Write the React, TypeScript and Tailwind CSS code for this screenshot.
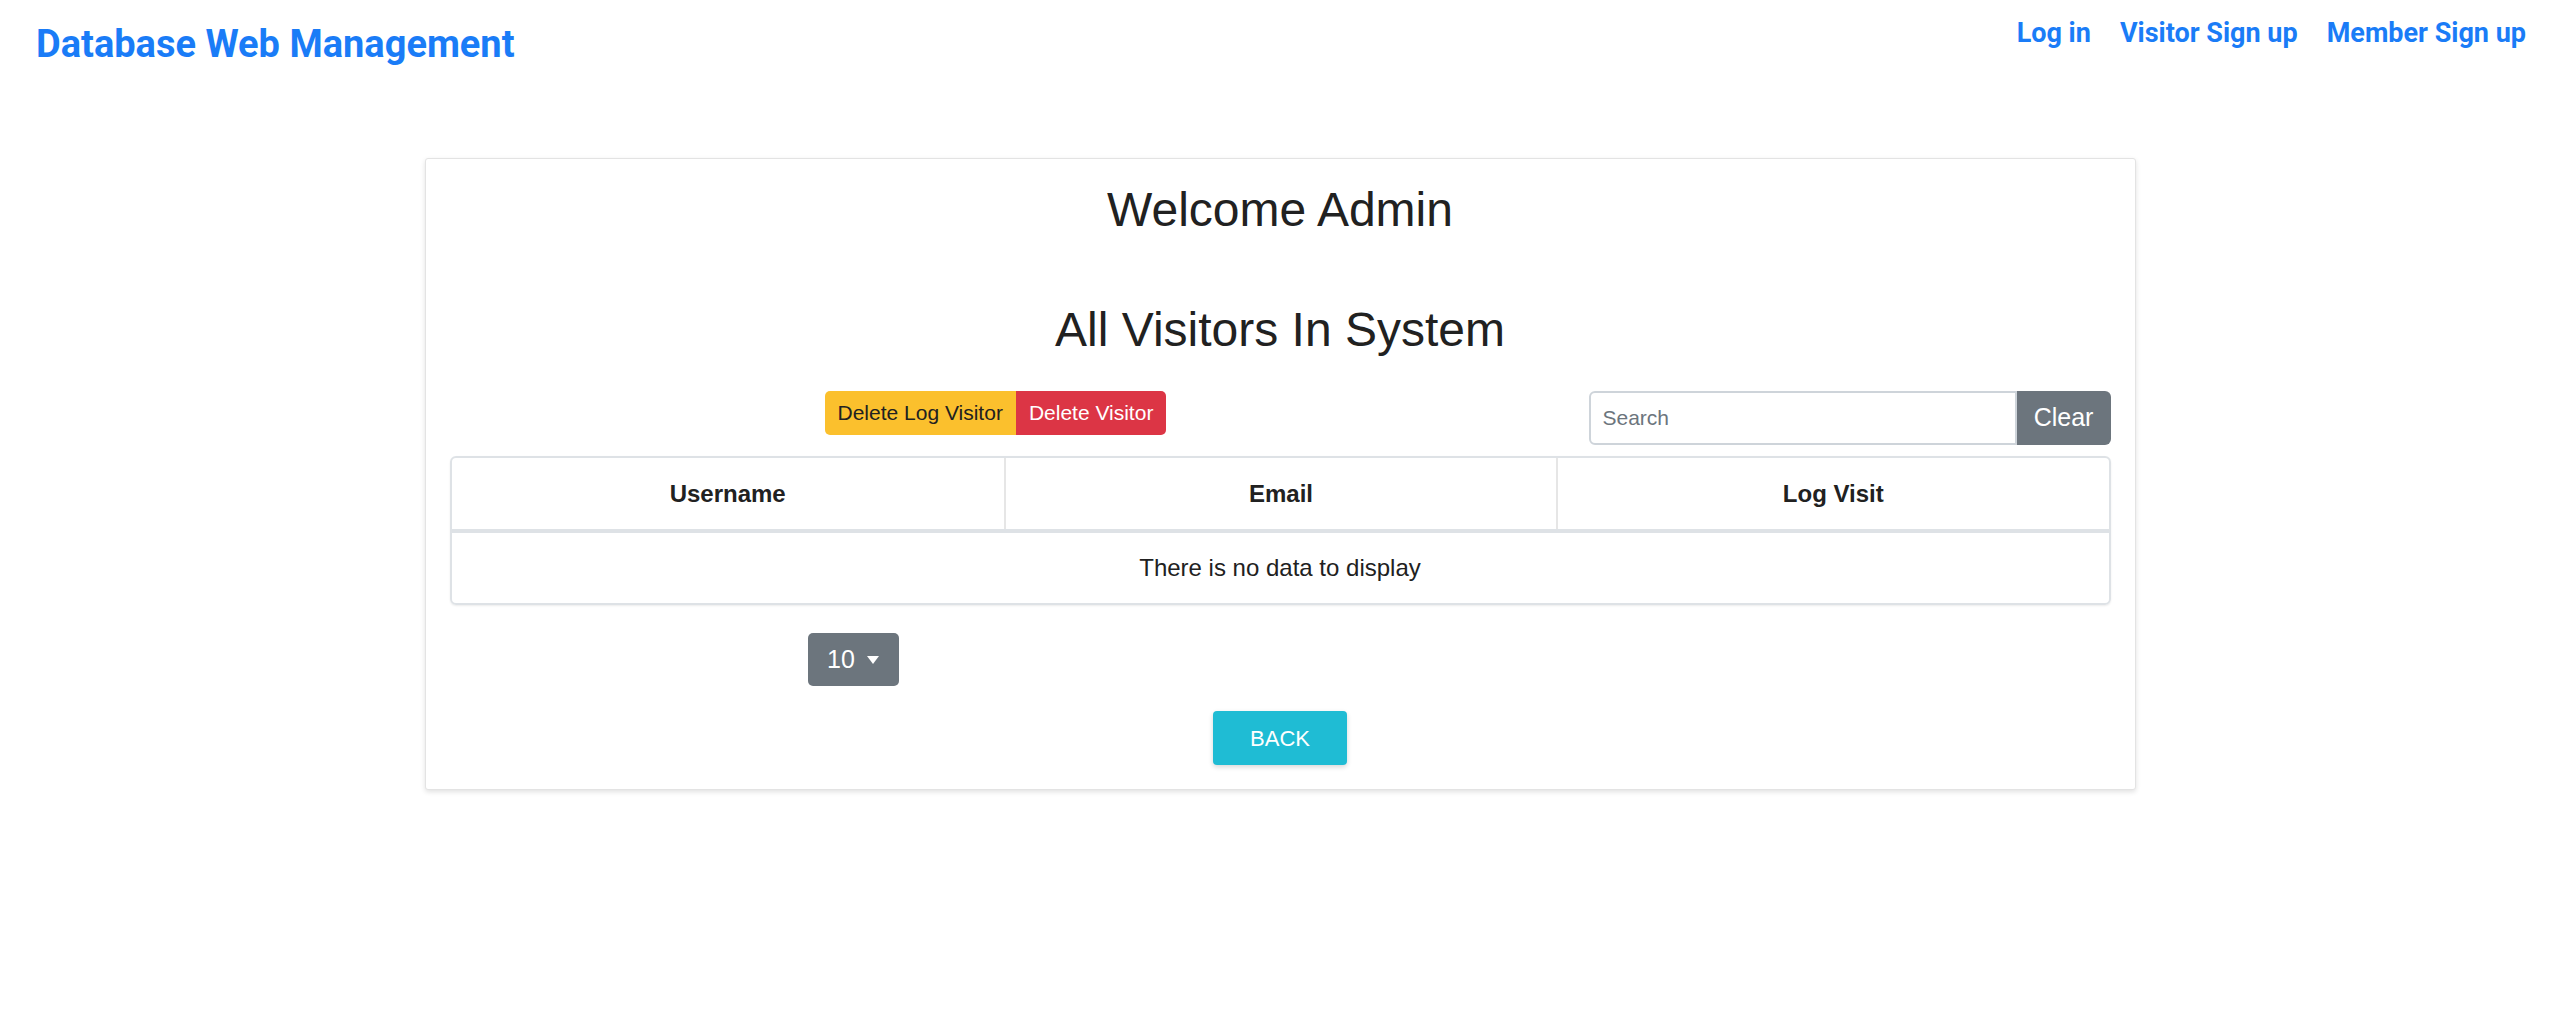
const App = () => {
  return (
    <div className="min-h-[1022px] bg-white" style={{ fontFamily: '"Liberation Sans", Arial, sans-serif' }}>
      <header className="flex items-start justify-between pl-[36px] pr-[34px]">
        <a className="mt-[22px] text-[38px] font-bold leading-[44px] text-[#1a7cf7]" style={{ fontFamily: 'Roboto, sans-serif' }}>
          Database Web Management
        </a>
        <nav className="mt-[16px] flex gap-[29px] text-[27px] font-bold leading-[34px] text-[#1a7cf7]" style={{ fontFamily: 'Roboto, sans-serif' }}>
          <a>Log in</a>
          <a>Visitor Sign up</a>
          <a>Member Sign up</a>
        </nav>
      </header>

      <div className="mx-auto mt-[92px] w-[1711px] rounded-[3px] border border-[#e3e3e3] bg-white px-6 pb-6 pt-[22px] shadow-[0_2px_5px_rgba(0,0,0,0.12)]">
        <h4 className="text-center text-[48px] leading-[58px] text-[#212121]">Welcome Admin</h4>
        <h4 className="mt-[62px] text-center text-[48px] leading-[58px] text-[#212121]">All Visitors In System</h4>

        <div className="mt-[32px] flex items-start">
          <div className="ml-[375px] flex">
            <button className="h-[44px] rounded-l-[5px] bg-[#fbc02d] px-[13px] text-[21px] text-[#212121]">Delete Log Visitor</button>
            <button className="h-[44px] rounded-r-[5px] bg-[#dc3545] px-[13px] text-[21px] text-white">Delete Visitor</button>
          </div>
          <div className="ml-auto flex h-[54px]">
            <input
              placeholder="Search"
              className="h-full w-[428px] rounded-l-[6px] border-2 border-[#ced4da] px-[12px] text-[21px] text-[#495057] placeholder:text-[#6c757d] outline-none"
            />
            <button className="h-full w-[94px] rounded-r-[6px] bg-[#6c757d] text-[25px] text-white">Clear</button>
          </div>
        </div>

        <div className="mt-[11px] overflow-hidden rounded-[6px] border-2 border-[#dee2e6] shadow-[0_1px_2px_rgba(0,0,0,0.08)]">
          <div className="grid grid-cols-3 border-b-4 border-[#dee2e6]">
            <div className="flex h-[71px] items-center justify-center text-[24px] font-bold text-[#212121]">Username</div>
            <div className="flex h-[71px] items-center justify-center border-l-2 border-[#e6e6e6] text-[24px] font-bold text-[#212121]">Email</div>
            <div className="flex h-[71px] items-center justify-center border-l-2 border-[#e6e6e6] text-[24px] font-bold text-[#212121]">Log Visit</div>
          </div>
          <div className="flex h-[70px] items-center justify-center text-[24px] text-[#212121]">There is no data to display</div>
        </div>

        <div className="ml-[358px] mt-[28px] flex h-[53px] w-[91px] items-center justify-center gap-[12px] rounded-[5px] bg-[#6c757d] text-[25px] text-white">
          <span>10</span>
          <svg width="12" height="8" viewBox="0 0 12 8"><path d="M0 0h12L6 8z" fill="#fff" /></svg>
        </div>

        <div className="mt-[25px] flex justify-center">
          <button className="h-[54px] w-[134px] rounded-[4px] bg-[#1fbcd4] text-[22px] text-white shadow-[0_2px_5px_rgba(0,0,0,0.16)]">BACK</button>
        </div>
      </div>
    </div>
  );
};

export default App;
